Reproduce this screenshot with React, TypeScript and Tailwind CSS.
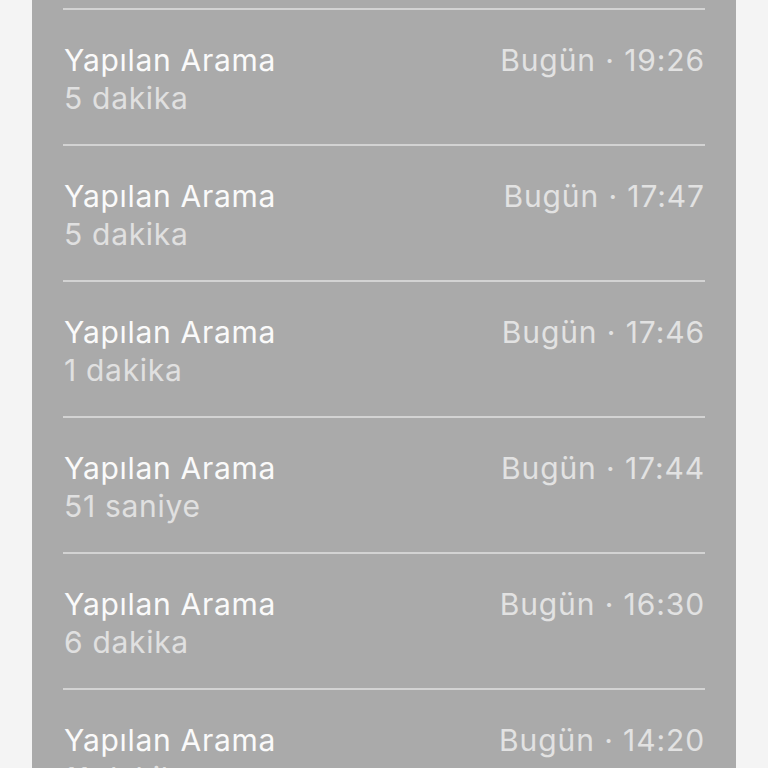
const calls = [
  { duration: '5 dakika', time: '19:26' },
  { duration: '5 dakika', time: '17:47' },
  { duration: '1 dakika', time: '17:46' },
  { duration: '51 saniye', time: '17:44' },
  { duration: '6 dakika', time: '16:30' },
  { duration: '11 dakika', time: '14:20' },
];

export default function App() {
  return (
    <div
      className="h-[768px] overflow-hidden bg-[#f4f4f4] flex justify-center"
      style={{ fontFamily: 'Inter, "Noto Sans", sans-serif' }}
    >
      <div className="w-[704px] h-full bg-[#aaaaaa] pt-[8px] px-[31px]">
        {calls.map((c, i) => (
          <div key={i} className="border-t-2 border-[#d3d3d3] pt-[31px] pb-[27px] flex justify-between pl-[1px]">
            <div className="flex flex-col">
              <span className="text-[30px] leading-[38px] text-[#fafafa] tracking-[0.7px]">Yapılan Arama</span>
              <span className="text-[30px] leading-[38px] text-[#e0e0e0] tracking-[0.7px]">{c.duration}</span>
            </div>
            <span className="text-[30px] leading-[38px] text-[#e2e2e2] tracking-[0.9px]">Bugün · {c.time}</span>
          </div>
        ))}
      </div>
    </div>
  );
}
